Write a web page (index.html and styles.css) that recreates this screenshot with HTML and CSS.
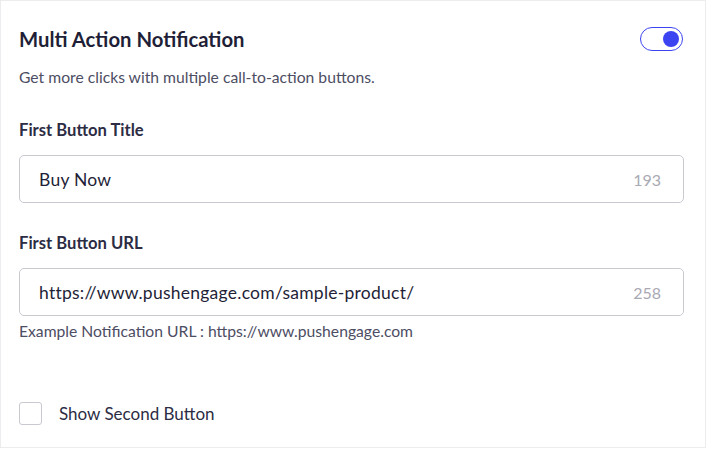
FILE: index.html
```html
<!DOCTYPE html>
<html lang="en">
<head>
  <meta charset="UTF-8" />
  <meta name="viewport" content="width=device-width, initial-scale=1" />
  <title>Multi Action Notification</title>
  <link rel="stylesheet" href="styles.css">
</head>
<body>

  <div class="card">
    <div class="header">
      <h2>Multi Action Notification</h2>
      <label class="toggle">
        <input type="checkbox" checked />
        <span class="track"><span class="knob"></span></span>
      </label>
    </div>
    <p class="subtitle">Get more clicks with multiple call-to-action buttons.</p>

    <div class="field">
      <label class="label">First Button Title</label>
      <div class="input-box">
        <span class="value">Buy Now</span>
        <span class="count">193</span>
      </div>
    </div>

    <div class="field">
      <label class="label">First Button URL</label>
      <div class="input-box">
        <span class="value">https://www.pushengage.com/sample-product/</span>
        <span class="count">258</span>
      </div>
      <p class="hint">Example Notification URL : https://www.pushengage.com</p>
    </div>

    <label class="check">
      <span class="box"></span>
      <span>Show Second Button</span>
    </label>
  </div>

</body>
</html>
```

FILE: styles.css
```css
body {
  margin: 0;
  background: #ffffff;
  font-family: Lato, 'Open Sans', sans-serif;
  color: #23233a;
}

.card {
  box-sizing: border-box;
  width: 706px;
  height: 448px;
  border: 1px solid #ececee;
  padding: 19px 22px 0 18px;
}

.header {
  display: flex;
  align-items: center;
  justify-content: space-between;
  height: 38px;
}

.header h2 {
  margin: 0;
  font-size: 20.3px;
  font-weight: 700;
  color: #1f1f38;
}

.toggle input {
  display: none;
}

.track {
  box-sizing: border-box;
  display: flex;
  align-items: center;
  justify-content: flex-end;
  width: 43px;
  height: 24px;
  border: 1.5px solid #3c44f2;
  border-radius: 12px;
  padding: 0 3px;
}

.knob {
  width: 16px;
  height: 16px;
  border-radius: 50%;
  background: #3c44f2;
}

.subtitle {
  margin: 10px 0 0;
  font-size: 15.7px;
  line-height: 19px;
  color: #4d4d63;
}

.field {
  margin-top: 33px;
}

.field + .field {
  margin-top: 30px;
}

.label {
  display: block;
  font-size: 16.6px;
  line-height: 20px;
  font-weight: 700;
  color: #2c2c44;
  margin-bottom: 15px;
}

.input-box {
  box-sizing: border-box;
  display: flex;
  align-items: center;
  justify-content: space-between;
  width: 665px;
  height: 48px;
  border: 1px solid #c9c9d2;
  border-radius: 5px;
  padding: 0 22px 0 19px;
}

.value {
  font-size: 17.5px;
  letter-spacing: 0.25px;
  color: #1f1f38;
}

.count {
  font-size: 16px;
  color: #a9a9b4;
}

.hint {
  margin: 6px 0 0;
  font-size: 15.7px;
  line-height: 19px;
  color: #4d4d63;
}

.check {
  display: flex;
  align-items: center;
  gap: 17px;
  margin-top: 61px;
  font-size: 17px;
  color: #2c2c44;
}

.box {
  box-sizing: border-box;
  width: 23px;
  height: 23px;
  border: 1px solid #c9c9d2;
  border-radius: 3px;
}
```
